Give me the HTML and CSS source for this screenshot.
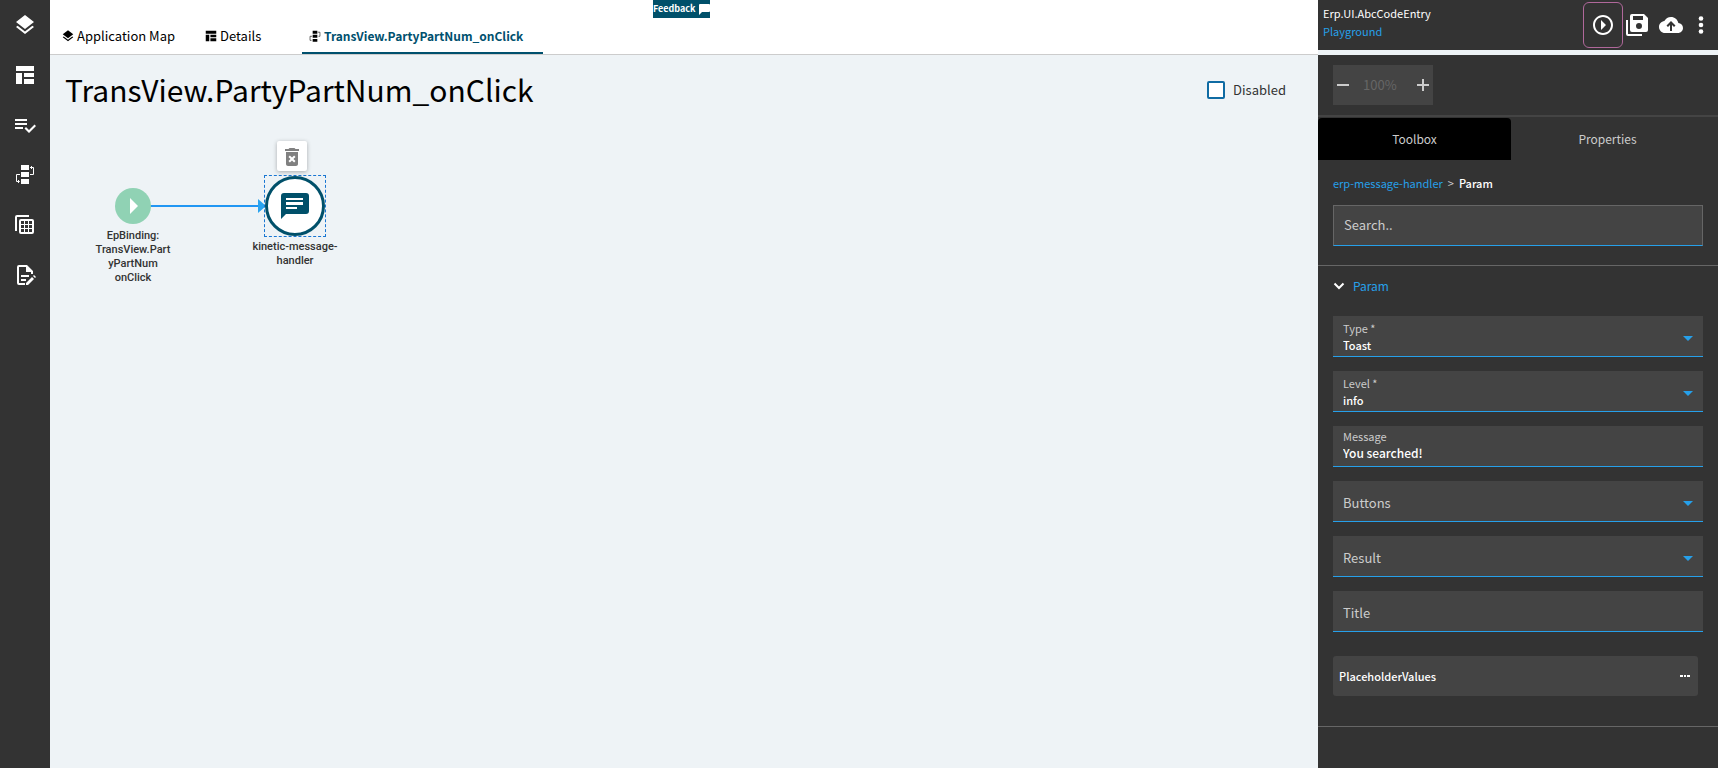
FILE: index.html
```html
<!DOCTYPE html>
<html lang="en">

<head>
    <meta charset="UTF-8">
    <meta name="viewport" content="width=device-width, initial-scale=1.0">
    <title>Erp.UI.AbcCodeEntry</title>
    <link rel="stylesheet" href="styles.css">
</head>

<body>
    <nav class="sidebar">
        <a href="#" aria-label="Layers">
            <svg width="24" height="24" viewBox="0 0 24 24"><path d="M11.99 18.54l-7.37-5.73L3 14.07l9 7 9-7-1.63-1.27-7.38 5.74zM12 16l7.36-5.73L21 9l-9-7-9 7 1.63 1.27L12 16z"/></svg>
        </a>
        <a href="#" aria-label="Page layout">
            <svg width="24" height="24" viewBox="0 0 24 24"><path d="M3 3h18v5H3zM3 10h6v11H3zM11 10h10v4H11zM11 16h10v5H11z"/></svg>
        </a>
        <a href="#" aria-label="Rules">
            <svg width="24" height="24" viewBox="0 0 24 24"><path d="M14 10H2v2h12v-2zm0-4H2v2h12V6zM2 16h8v-2H2v2zm19.5-4.5L23 13l-6.99 7-4.51-4.5L13 14l3.01 3 5.49-5.5z"/></svg>
        </a>
        <a href="#" aria-label="Events">
            <svg width="24" height="24" viewBox="0 0 24 24"><path d="M8 2h8v5H8zM8 9h8v5H8zM8 16h8v5H8z"/><path class="line" d="M17 4.500h3.500v7H17M19 3l-1.500 1.500L19 6M7 11.500H3.500v7H6M5 17l1.500 1.500L5 20"/></svg>
        </a>
        <a href="#" aria-label="Data views">
            <svg width="24" height="24" viewBox="0 0 24 24"><path d="M4 2h12v2H4v14H2V4a2 2 0 0 1 2-2z"/><path fill-rule="evenodd" d="M8 6h11a2 2 0 0 1 2 2v11a2 2 0 0 1-2 2H8a2 2 0 0 1-2-2V8a2 2 0 0 1 2-2zM8 8v3h3V8zM12 8v3h3V8zM16 8v3h3V8zM8 12v3h3v-3zM12 12v3h3v-3zM16 12v3h3v-3zM8 16v3h3v-3zM12 16v3h3v-3zM16 16v3h3v-3z"/></svg>
        </a>
        <a href="#" aria-label="Edit notes">
            <svg width="24" height="24" viewBox="0 0 24 24"><path d="M12 22H6a2 2 0 0 1-2-2V4a2 2 0 0 1 2-2h8l6 6v3h-2V9h-5V4H6v16h6zM8 12h8v2H8zM8 16h5v2H8zM13 20l6-6 2 2-6 6h-2zM20 13l1-1 2 2-1 1z"/></svg>
        </a>
    </nav>

    <main class="main">
        <button class="feedback" type="button">Feedback
            <svg width="11" height="12" viewBox="0 0 11 12"><path d="M1 1h9a1 1 0 0 1 1 1v6a1 1 0 0 1-1 1H3l-3 3V2a1 1 0 0 1 1-1z"/></svg>
        </button>
        <div class="tabs">
            <a class="tab tab-map" href="#">
                <svg width="14" height="14" viewBox="0 0 24 24"><path d="M11.99 18.54l-7.37-5.73L3 14.07l9 7 9-7-1.63-1.27-7.38 5.74zM12 16l7.36-5.73L21 9l-9-7-9 7 1.63 1.27L12 16z"/></svg>
                Application Map
            </a>
            <a class="tab tab-details" href="#">
                <svg width="14" height="14" viewBox="0 0 24 24"><path d="M3 3h18v5H3zM3 10h6v11H3zM11 10h10v4H11zM11 16h10v5H11z"/></svg>
                Details
            </a>
            <a class="tab active" href="#">
                <svg width="14" height="14" viewBox="0 0 24 24"><path d="M8 3h8v5H8zM8 10h8v5H8zM8 17h8v5H8z"/><path class="line" d="M17 5.500h3.500v7H18M7 12.500H3.500v7H6"/></svg>
                TransView.PartyPartNum_onClick
            </a>
        </div>

        <div class="title-row">
            <h1>TransView.PartyPartNum_onClick</h1>
            <label class="check"><input type="checkbox"> Disabled</label>
        </div>

        <!-- Event flow -->
        <div class="canvas">
            <svg class="link" width="116" height="16" viewBox="0 0 116 16"><path class="wire" d="M0 8h110"/><path class="head" d="M108 1l8 7-8 7z"/></svg>
            <div class="node node-start">
                <svg width="36" height="36" viewBox="0 0 36 36"><circle cx="18" cy="18" r="18"/><path d="M15 10v16l8-8z"/></svg>
                <p>EpBinding:<br>TransView.Part<br>yPartNum<br>onClick</p>
            </div>
            <div class="node node-message">
                <div class="selection">
                    <svg width="60" height="60" viewBox="0 0 60 60">
                        <circle cx="30" cy="30" r="28.500"/>
                        <path class="bubble" d="M19 17h22a3 3 0 0 1 3 3v15a3 3 0 0 1-3 3H21l-5 5V20a3 3 0 0 1 3-3z"/>
                        <path class="lines" d="M21 22h17v2H21zM21 26h17v3H21zM21 31h11v2H21z"/>
                    </svg>
                </div>
                <p>kinetic-message-<br>handler</p>
            </div>
            <button class="delete" type="button" aria-label="Delete">
                <svg width="24" height="24" viewBox="0 0 24 24"><path d="M6 20c0 1.100.9 2 2 2h8c1.100 0 2-.9 2-2V8H6v12zm2.460-7.120l1.410-1.410L12 13.590l2.120-2.120 1.410 1.410L13.410 15l2.120 2.120-1.410 1.410L12 16.410l-2.120 2.120-1.410-1.410L10.590 15l-2.130-2.120zM15.500 5l-1-1h-5l-1 1H5v2h14V5z"/></svg>
            </button>
        </div>
    </main>

    <aside class="panel">
        <header class="panel-header">
            <div class="app-name">
                <span>Erp.UI.AbcCodeEntry</span>
                <a href="#">Playground</a>
            </div>
            <button class="play" type="button" aria-label="Preview">
                <svg width="24" height="24" viewBox="0 0 24 24"><path d="M10 17l5-5-5-5v10zM12 2C6.480 2 2 6.480 2 12s4.480 10 10 10 10-4.480 10-10S17.520 2 12 2zm0 18c-4.410 0-8-3.590-8-8s3.590-8 8-8 8 3.590 8 8-3.590 8-8 8z"/></svg>
            </button>
            <button class="save" type="button" aria-label="Save">
                <svg width="24" height="24" viewBox="0 0 24 24"><path d="M1 7h2v14h14v2H3a2 2 0 0 1-2-2z"/><path fill-rule="evenodd" d="M7 1h12l4 4v12a2 2 0 0 1-2 2H7a2 2 0 0 1-2-2V3a2 2 0 0 1 2-2zM8 3v4h10V3zM14 10a3 3 0 1 0 0 6 3 3 0 0 0 0-6z"/></svg>
            </button>
            <button class="publish" type="button" aria-label="Publish">
                <svg width="24" height="24" viewBox="0 0 24 24"><path d="M19.350 10.040C18.670 6.590 15.640 4 12 4 9.110 4 6.600 5.640 5.350 8.040 2.340 8.360 0 10.910 0 14c0 3.310 2.690 6 6 6h13c2.760 0 5-2.240 5-5 0-2.640-2.050-4.780-4.650-4.960zM13 12v6h-2v-6l-2 2-1.500-1.500L12 8l4.500 4.500L15 14z"/></svg>
            </button>
            <button class="more" type="button" aria-label="More">
                <svg width="6" height="18" viewBox="0 0 6 18"><circle cx="3" cy="2.500" r="2.300"/><circle cx="3" cy="9" r="2.300"/><circle cx="3" cy="15.500" r="2.300"/></svg>
            </button>
        </header>

        <div class="zoom-bar">
            <div class="zoom">
                <button type="button" aria-label="Zoom out"><svg width="12" height="12" viewBox="0 0 12 12"><path d="M0 5h12v2H0z"/></svg></button>
                <span>100%</span>
                <button type="button" aria-label="Zoom in"><svg width="12" height="12" viewBox="0 0 12 12"><path d="M0 5h5V0h2v5h5v2H7v5H5V7H0z"/></svg></button>
            </div>
        </div>

        <div class="panel-tabs">
            <button class="active" type="button">Toolbox</button>
            <button type="button">Properties</button>
        </div>

        <div class="search-block">
            <div class="breadcrumb"><a href="#">erp-message-handler</a><span>&gt;</span><b>Param</b></div>
            <input class="search" type="search" placeholder="Search.." aria-label="Search">
        </div>

        <section class="params">
            <button class="section-title" type="button">
                <svg width="12" height="8" viewBox="0 0 12 8"><path d="M1.500 1.500L6 6l4.500-4.500"/></svg>
                Param
            </button>
            <div class="field">
                <label for="type">Type *</label>
                <select id="type"><option>Toast</option></select>
                <svg width="10" height="5" viewBox="0 0 10 5"><path d="M0 0h10L5 5z"/></svg>
            </div>
            <div class="field">
                <label for="level">Level *</label>
                <select id="level"><option>info</option></select>
                <svg width="10" height="5" viewBox="0 0 10 5"><path d="M0 0h10L5 5z"/></svg>
            </div>
            <div class="field text">
                <label for="message">Message</label>
                <input id="message" type="text" value="You searched!">
            </div>
            <div class="field empty">
                <label for="buttons">Buttons</label>
                <select id="buttons"><option></option></select>
                <svg width="10" height="5" viewBox="0 0 10 5"><path d="M0 0h10L5 5z"/></svg>
            </div>
            <div class="field empty">
                <label for="result">Result</label>
                <select id="result"><option></option></select>
                <svg width="10" height="5" viewBox="0 0 10 5"><path d="M0 0h10L5 5z"/></svg>
            </div>
            <div class="field empty">
                <label for="title">Title</label>
                <input id="title" type="text">
            </div>
            <button class="placeholder-values" type="button">
                PlaceholderValues
                <svg width="10" height="4" viewBox="0 0 10 4"><path d="M0 1h3v2H0zM4 1h2v2H4zM7 1h3v2H7z"/></svg>
            </button>
        </section>
    </aside>
</body>

</html>
```
FILE: styles.css
```css
* {
    box-sizing: border-box;
}

body {
    margin: 0;
    min-height: 100vh;
    display: flex;
    font-family: "Noto Sans CJK SC", "Open Sans", sans-serif;
    font-size: 13px;
    line-height: 18px;
    background-color: #eef3f6;
    color: #000000;
}

a {
    text-decoration: none;
    color: #26a0ea;
}

button,
input,
select {
    font: inherit;
    color: inherit;
    background: none;
    border: none;
    margin: 0;
    padding: 0;
}

button {
    cursor: pointer;
}

svg {
    display: block;
    flex: none;
    fill: currentColor;
}

.line {
    fill: none;
    stroke: currentColor;
    stroke-width: 1;
}

/* left bar */
.sidebar {
    width: 50px;
    flex: none;
    display: flex;
    flex-direction: column;
    align-items: center;
    gap: 26px;
    padding-top: 13px;
    background-color: #333333;
}

.sidebar a {
    color: #ffffff;
}

/* main */
.main {
    flex: 1;
    min-width: 0;
    position: relative;
}

.feedback {
    position: absolute;
    top: 0;
    left: 50%;
    margin-left: -31px;
    height: 18px;
    display: flex;
    align-items: center;
    gap: 3px;
    background-color: #00506a;
    color: #ffffff;
    font-size: 9px;
    font-weight: bold;
}

.tabs {
    height: 55px;
    padding: 18px 0 0 11px;
    display: flex;
    background-color: #ffffff;
    border-bottom: 1px solid #cccccc;
}

.tab {
    display: flex;
    align-items: center;
    gap: 2px;
    color: #000000;
}

.tab-map {
    width: 143px;
}

.tab-details {
    width: 98px;
}

.tab.active {
    width: 241px;
    padding: 2px 0 0 6px;
    color: #00506e;
    font-size: 12px;
    font-weight: bold;
    border-bottom: 2px solid #00506e;
}

.tab svg {
    color: #000000;
}

.title-row {
    display: flex;
    justify-content: space-between;
    align-items: center;
    height: 70px;
    margin-bottom: 2px;
    padding: 0 32px 0 15px;
}

h1 {
    margin: 0;
    padding-bottom: 2px;
    font-size: 30px;
    line-height: 40px;
    font-weight: normal;
}

.check {
    display: flex;
    align-items: center;
    gap: 8px;
    color: #333333;
}

.check input {
    appearance: none;
    width: 18px;
    height: 18px;
    border: 2px solid #0f6ba3;
    border-radius: 2px;
    background-color: #ffffff;
}

.canvas {
    position: relative;
    font-family: Roboto, sans-serif;
    font-size: 11px;
    line-height: 14px;
    font-weight: 500;
    color: #333333;
}

.node {
    position: absolute;
    display: flex;
    flex-direction: column;
    align-items: center;
    text-align: center;
}

.node p {
    margin: 0;
}

.node-start {
    left: 43px;
    top: 61px;
    width: 80px;
    gap: 5px;
}

.node-start circle {
    fill: #90d2b4;
}

.node-start path {
    fill: #ffffff;
}

.node-message {
    left: 195px;
    top: 48px;
    width: 100px;
    gap: 3px;
}

.selection {
    border: 1px dashed #1976d2;
}

.selection circle {
    fill: #ffffff;
    stroke: #00506a;
    stroke-width: 3;
}

.bubble {
    fill: #00506a;
}

.lines {
    fill: #ffffff;
}

.link {
    position: absolute;
    left: 100px;
    top: 71px;
}

.wire {
    stroke: #2196f3;
    stroke-width: 2;
}

.head {
    fill: #29a3ef;
}

.delete {
    position: absolute;
    left: 227px;
    top: 14px;
    width: 30px;
    height: 30px;
    display: flex;
    align-items: center;
    justify-content: center;
    background-color: #ffffff;
    border-radius: 2px;
    box-shadow: 0 1px 4px rgba(0, 0, 0, 0.3);
    color: #808080;
}

/* right panel */
.panel {
    width: 400px;
    flex: none;
    background-color: #333333;
    color: #cccccc;
    font-size: 12px;
}

.panel-header {
    height: 55px;
    padding: 0 14px 0 5px;
    display: flex;
    align-items: center;
    border-bottom: 5px solid #eef3f6;
    color: #ffffff;
}

.app-name {
    flex: 1;
    display: flex;
    flex-direction: column;
    padding-bottom: 6px;
    font-size: 11px;
}

.play {
    width: 40px;
    height: 46px;
    display: flex;
    align-items: center;
    justify-content: center;
    border: 1px solid #b0689b;
    border-radius: 6px;
}

.save {
    margin-left: 2px;
}

.publish {
    margin: 0 15px 0 10px;
}

.zoom-bar {
    padding: 10px 15px;
    border-bottom: 2px solid #444444;
}

.zoom {
    width: 100px;
    height: 40px;
    padding: 0 4px;
    display: flex;
    align-items: center;
    background-color: #444444;
}

.zoom span {
    flex: 1;
    padding-left: 14px;
    font-size: 13px;
    color: #666666;
}

.panel-tabs {
    display: flex;
    padding: 1px 14px 0 0;
}

.panel-tabs button {
    flex: 1;
    height: 42px;
    padding-bottom: 1px;
}

.panel-tabs .active {
    background-color: #000000;
    border-radius: 4px 4px 0 0;
}

.search-block {
    padding: 14px 15px 19px;
    border-bottom: 1px solid #666666;
}

.breadcrumb {
    display: flex;
    gap: 5px;
    margin-bottom: 13px;
    font-size: 11px;
}

.breadcrumb b {
    color: #ffffff;
    font-weight: 500;
}

.search {
    display: block;
    width: 100%;
    height: 41px;
    padding: 0 10px 2px;
    font-size: 13px;
    background-color: #444444;
    border: 1px solid #666666;
    border-bottom-color: #26a0ea;
}

.search::placeholder {
    color: #cccccc;
    opacity: 1;
}

.params {
    padding: 11px 15px 30px;
    border-bottom: 1px solid #666666;
}

.section-title {
    display: flex;
    align-items: center;
    gap: 8px;
    margin-bottom: 21px;
    color: #26a0ea;
}

.section-title path {
    fill: none;
    stroke: #ffffff;
    stroke-width: 2;
}

.field {
    display: grid;
    height: 41px;
    margin-bottom: 14px;
    background-color: #444444;
    border-bottom: 1px solid #26a0ea;
    font-size: 11px;
}

/* label, control and arrow share one cell */
.field > * {
    grid-area: 1 / 1;
}

.field label {
    padding: 3px 10px;
    pointer-events: none;
}

.field select,
.field input {
    appearance: none;
    width: 100%;
    height: 40px;
    padding: 18px 10px 0;
    color: #ffffff;
    font-weight: 500;
}

.field svg {
    align-self: center;
    justify-self: end;
    margin: 4px 10px 0 0;
    color: #26a0ea;
    pointer-events: none;
}

.field.text label {
    padding-top: 1px;
}

.field.text input {
    padding-top: 12px;
    font-size: 12px;
}

.field.empty label {
    align-self: center;
    padding-top: 7px;
    font-size: 13px;
}

.placeholder-values {
    display: flex;
    align-items: center;
    justify-content: space-between;
    width: calc(100% - 5px);
    height: 40px;
    margin-top: 24px;
    padding: 0 8px 0 6px;
    background-color: #444444;
    border-radius: 3px;
    color: #ffffff;
    font-size: 11px;
    font-weight: 500;
}
```
